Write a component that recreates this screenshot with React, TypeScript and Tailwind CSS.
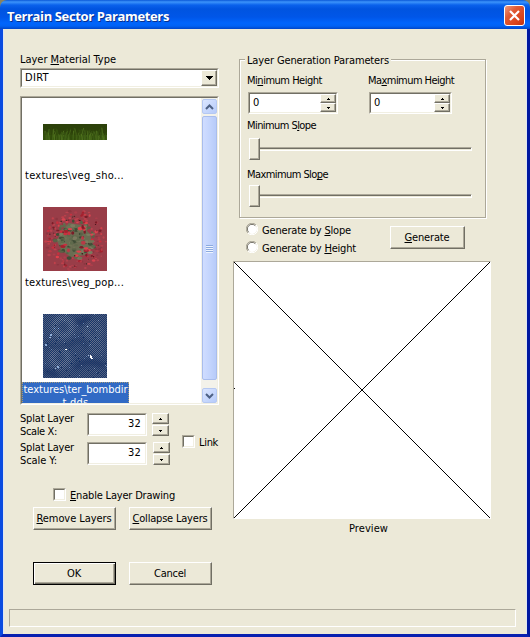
import { useLayoutEffect, useRef, useState, type ReactNode } from "react";

const SUNKEN =
  "border border-t-[#aca899] border-l-[#aca899] border-r-white border-b-white";
const SUNKEN_INNER =
  "border border-t-[#716f64] border-l-[#716f64] border-r-[#f1efe2] border-b-[#f1efe2]";
const RAISED =
  "bg-[#ece9d8] border border-t-white border-l-white border-r-[#716f64] border-b-[#716f64] shadow-[inset_-1px_-1px_0_#aca899]";

/* Text run fitted to a fixed width; "&" marks the mnemonic letter. */
function T({ text, w, className = "" }: { text: string; w: number; className?: string }) {
  const ref = useRef<HTMLSpanElement>(null);
  const [spacing, setSpacing] = useState(0);
  const at = text.indexOf("&");
  const plain = text.replace("&", "");
  useLayoutEffect(() => {
    if (ref.current) {
      setSpacing((w - ref.current.getBoundingClientRect().width) / plain.length);
    }
  }, [w, plain]);
  return (
    <span className={`block h-[13px] shrink-0 leading-[13px] whitespace-pre ${className}`}>
      <span ref={ref} style={{ letterSpacing: spacing }}>
        {at < 0 ? (
          plain
        ) : (
          <>
            {plain.slice(0, at)}
            <span className="underline decoration-1 underline-offset-1 [text-decoration-skip-ink:none]">
              {plain[at]}
            </span>
            {plain.slice(at + 1)}
          </>
        )}
      </span>
    </span>
  );
}

function Sunken({ children, className = "", inner = "" }: { children?: ReactNode; className?: string; inner?: string }) {
  return (
    <div className={`${SUNKEN} ${className}`}>
      <div className={`${SUNKEN_INNER} flex h-full w-full bg-white ${inner}`}>{children}</div>
    </div>
  );
}

function Button({ text, w, className = "w-[83px]", primary = false }: { text: string; w: number; className?: string; primary?: boolean }) {
  return (
    <button
      className={`flex h-[23px] items-start justify-center pr-px ${className} ${
        primary
          ? "border border-black bg-[#ece9d8] pt-[4px] shadow-[inset_1px_1px_0_#fff,inset_-1px_-1px_0_#716f64,inset_-2px_-2px_0_#aca899]"
          : `${RAISED} pt-[4px]`
      }`}
    >
      <T text={text} w={w} />
    </button>
  );
}

function SpinButton({ up, className }: { up?: boolean; className: string }) {
  return (
    <div className={`${RAISED} flex items-center justify-center ${className}`}>
      <svg width="3" height="2" shapeRendering="crispEdges">
        <path d={up ? "M1 0h1v1h1v1H0V1h1z" : "M0 0h3v1H2v1H1V1H0z"} fill="#000" />
      </svg>
    </div>
  );
}

function ScaleRow({ axis, shift }: { axis: string; shift?: boolean }) {
  return (
    <div className="flex h-[29px]">
      <div className="w-[67px]">
        <T text="Splat Layer" w={54} className="-mt-px" />
        <T text={`Scale ${axis}:`} w={37} />
      </div>
      <Sunken className="h-[23px] w-[60px]" inner="justify-end pt-[2px] pr-[4px]">
        <T text="32" w={13} />
      </Sunken>
      <div className={`flex flex-col gap-px ${shift ? "ml-[6px]" : "ml-[5px]"}`}>
        <SpinButton up className="h-[11px] w-[17px]" />
        <SpinButton className="h-[11px] w-[17px]" />
      </div>
    </div>
  );
}

function CheckBox() {
  return <Sunken className="h-[13px] w-[13px] shrink-0" />;
}

function Radio({ text, w }: { text: string; w: number }) {
  return (
    <div className="flex h-[18px]">
      <svg width="12" height="12" viewBox="0 0 12 12" className="mr-[4px]">
        <circle cx="6" cy="6" r="5" fill="#fff" />
        <path d="M1.9 10.1A5.6 5.6 0 0 1 10.1 1.9" fill="none" stroke="#aca899" />
        <path d="M2.7 9.3A4.6 4.6 0 0 1 9.3 2.7" fill="none" stroke="#716f64" />
        <path d="M10.1 1.9A5.6 5.6 0 0 1 1.9 10.1" fill="none" stroke="#fff" />
      </svg>
      <T text={text} w={w} className="mt-px" />
    </div>
  );
}

function HeightField({ label, w, className }: { label: string; w: number; className: string }) {
  return (
    <div>
      <T text={label} w={w} />
      <Sunken className={`mt-[5px] ml-px h-[22px] ${className}`} inner="pl-[3px]">
        <T text="0" w={6} className="mt-[2px] grow" />
        <div className="flex flex-col">
          <SpinButton up className="h-[9px] w-[16px]" />
          <SpinButton className="h-[9px] w-[16px]" />
        </div>
      </Sunken>
    </div>
  );
}

function Slider() {
  return (
    <div className="flex h-[22px] items-start pl-[2px]">
      <div className={`${RAISED} h-[22px] w-[11px]`} />
      <div className="mt-[9px] h-[4px] w-[212px] border-t border-r border-b border-t-[#aca899] border-r-white border-b-white">
        <div className="h-px bg-[#716f64]" />
      </div>
    </div>
  );
}

function randomizer(seed: number) {
  let s = seed;
  return () => {
    s = (s * 16807) % 2147483647;
    return s / 2147483647;
  };
}

function Grass() {
  const r = randomizer(71);
  const tints = ["#41611a", "#587c22", "#385610", "#4c6d1c", "#304a0c"];
  return (
    <svg width="64" height="16" className="block bg-[#2c410a]">
      <rect y="11" width="64" height="5" fill="#35500f" />
      {Array.from({ length: 100 }, (_, i) => {
        const x = (i * 64) / 100 + r() * 2;
        const h = 4 + r() * 9;
        const lean = (r() - 0.5) * 5;
        return (
          <path
            key={i}
            d={`M${x} 16Q${x} ${16 - h / 2} ${x + lean} ${16 - h}`}
            fill="none"
            stroke={tints[Math.floor(r() * 5)]}
            strokeWidth="0.7"
          />
        );
      })}
    </svg>
  );
}

function Poppies() {
  const r = randomizer(913);
  const leaves = ["#596246", "#6f7455", "#3f4d36", "#7b7a5f", "#5f6a4c"];
  const petals = ["#c92f3e", "#d84450", "#a5202e", "#e0404a", "#b83a46", "#7b1d28"];
  const blobs = (n: number, tints: string[], min: number, max: number, size: number, key: string) =>
    Array.from({ length: n }, (_, i) => {
      const a = r() * Math.PI * 2;
      const d = min + (max - min) * Math.sqrt(r());
      return (
        <ellipse
          key={key + i}
          cx={32 + Math.cos(a) * d}
          cy={33 + Math.sin(a) * d}
          rx={size * (0.5 + r() * 0.7)}
          ry={size * (0.4 + r() * 0.5)}
          fill={tints[i % tints.length]}
        />
      );
    });
  return (
    <svg width="64" height="64" className="block bg-[#993d48]">
      {blobs(120, ["#ad3e4b", "#b9434f", "#8d3540", "#c0404b"], 10, 31, 1.5, "o")}
      <path d="M18 24L26 16L38 18L47 27L50 38L42 48L28 50L18 43L14 34Z" fill="#6a6d52" />
      {blobs(90, leaves, 0, 20, 2.2, "l")}
      {blobs(60, petals, 15, 29, 1.6, "p")}
      {blobs(24, petals, 4, 16, 2.4, "c")}
      {blobs(26, ["#43151b", "#2d2a20"], 5, 27, 0.8, "d")}
    </svg>
  );
}

function BombDirt() {
  const r = randomizer(4242);
  return (
    <svg width="64" height="64" className="block bg-[#526080]">
      <defs>
        <pattern id="dither" width="2" height="2" patternUnits="userSpaceOnUse">
          <path d="M0 0h1v1H0zM1 1h1v1H1z" fill="#173568" shapeRendering="crispEdges" />
        </pattern>
        <filter id="soft">
          <feGaussianBlur stdDeviation="2.2" />
        </filter>
      </defs>
      <g filter="url(#soft)" fill="none">
        <circle cx="20" cy="13" r="9" stroke="#7b879d" strokeWidth="5" />
        <circle cx="50" cy="17" r="7" stroke="#707b93" strokeWidth="4" />
        <circle cx="54" cy="33" r="5" stroke="#69758e" strokeWidth="4" />
        <circle cx="17" cy="44" r="8" stroke="#78849d" strokeWidth="5" />
        <path d="M2 31Q15 38 28 30T44 34" stroke="#34466c" strokeWidth="4" />
        <path d="M32 54Q43 43 62 52M34 5Q37 14 46 2M1 57L15 61" stroke="#253963" strokeWidth="5" />
      </g>
      {Array.from({ length: 150 }, (_, i) => (
        <rect
          key={i}
          x={Math.floor(r() * 64)}
          y={Math.floor(r() * 64)}
          width="1"
          height="1"
          fill={["#8291ac", "#263c66", "#6f85a9", "#1d3462"][i % 4]}
        />
      ))}
      <rect width="64" height="64" fill="url(#dither)" />
      <path d="M7 20h2v2H7zM6 23h2v1H6zM2 30h2v2H2zM11 14h1v1h-1zM15 14h1v1h-1zM14 52h2v2h-2zM12 54h1v1h-1zM44 12h1v1h-1zM45 41h1v1h-1z" fill="#8dacd6" />
      <path d="M22 35h2v1h-2zM47 41h1v1h1v2h1v1h-2v-1h-1z" fill="#fff" />
    </svg>
  );
}

function ScrollButton({ up }: { up?: boolean }) {
  return (
    <div className="mx-auto flex h-[15px] w-[15px] shrink-0 items-center justify-center rounded-[2px] border border-[#b5c8f2] bg-gradient-to-br from-[#dbe6ff] to-[#b6cbfa]">
      <svg width="9" height="6" viewBox="0 0 9 6">
        <path d={up ? "M1 5L4.5 1.5L8 5" : "M1 1L4.5 4.5L8 1"} fill="none" stroke="#4d6185" strokeWidth="2" />
      </svg>
    </div>
  );
}

function TitleBar() {
  return (
    <div className="flex h-[29px] shrink-0 rounded-t-[7px] bg-[linear-gradient(#0a58d8_0px,#3c94fb_2px,#0a62ec_5px,#0054e0_9px,#0056e8_17px,#0065fc_23px,#0062f5_26px,#0046c8_29px)] pl-[7px]">
      <T
        text="Terrain Sector Parameters"
        w={162}
        className="mt-[10px] grow font-['Open_Sans',sans-serif] text-[13px] font-bold text-white [text-shadow:1px_1px_0_#0a318c]"
      />
      <div className="mt-[5px] mr-[5px] flex h-[21px] w-[21px] items-center justify-center rounded-[3px] border border-white bg-[linear-gradient(135deg,#ee9a7f_0%,#e05a35_35%,#d9431a_75%,#b83212_100%)]">
        <svg width="13" height="13" viewBox="0 0 13 13">
          <path d="M2 2L11 11M11 2L2 11" stroke="#fff" strokeWidth="2.2" />
        </svg>
      </div>
    </div>
  );
}

function TextureList() {
  return (
    <Sunken className="mt-[8px] h-[309px] w-[199px]" inner="overflow-hidden">
      <div className="h-[305px] w-[179px] shrink-0 overflow-hidden">
        <div className="mt-[26px] ml-[21px]"><Grass /></div>
        <T text={"textures\\veg_sho..."} w={99} className="mt-[29px] ml-[3px]" />
        <div className="mt-[25px] ml-[21px]"><Poppies /></div>
        <T text={"textures\\veg_pop..."} w={99} className="mt-[5px] ml-[3px]" />
        <div className="mt-[25px] ml-[21px]"><BombDirt /></div>
        <div className="mt-[4px] flex h-[30px] w-[107px] flex-col items-center border border-dotted border-[#a39a7c] bg-[#316ac5] text-white">
          <T text={"textures\\ter_bombdir"} w={104} />
          <T text="t.dds" w={26} />
        </div>
      </div>
      <div className="flex w-[16px] flex-col bg-[#f3f2ea] pt-px">
        <ScrollButton up />
        <div className="mx-auto mt-[2px] flex h-[264px] w-[15px] flex-col items-center justify-center gap-px rounded-[2px] border border-[#a9bdec] bg-[linear-gradient(90deg,#d0ddff,#c4d5fd_50%,#b7cbf9)]">
          <i className="h-px w-[7px] bg-[#8caadf] shadow-[0_1px_0_#eef4fe]" />
          <i className="h-px w-[7px] bg-[#8caadf] shadow-[0_1px_0_#eef4fe]" />
          <i className="h-px w-[7px] bg-[#8caadf] shadow-[0_1px_0_#eef4fe]" />
          <i className="h-px w-[7px] bg-[#8caadf] shadow-[0_1px_0_#eef4fe]" />
        </div>
        <div className="h-[8px] shrink-0" />
        <ScrollButton />
      </div>
    </Sunken>
  );
}

export default function App() {
  return (
    <div className="flex h-[637px] w-[530px] flex-col overflow-hidden bg-[#8a8360] font-['DejaVu_Sans_Condensed','DejaVu_Sans',sans-serif] text-[11px] text-black">
      <TitleBar />
      <div className="flex grow flex-col border-r-[3px] border-b-[3px] border-l-[3px] border-r-[#0018a0] border-b-[#0820b0] border-l-[#0a4be0] bg-[#ece9d8] pl-[6px] shadow-[inset_1px_0_0_#dfe6f2,inset_-1px_0_0_#dfe6f2]">
        <div className="flex h-[580px]">
          <div className="w-[213px] pt-[24px] pl-[11px]">
            <T text="Layer &Material Type" w={96} />
            <Sunken className="mt-[2px] h-[20px] w-[199px]" inner="pl-[3px]">
              <T text="DIRT" w={24} className="mt-px grow" />
              <div className={`${RAISED} flex h-[16px] w-[16px] items-center justify-center`}>
                <svg width="7" height="4" shapeRendering="crispEdges">
                  <path d="M0 0h7v1H6v1H5v1H4v1H3V3H2V2H1V1H0z" />
                </svg>
              </div>
            </Sunken>
            <TextureList />
            <div className="mt-[8px] flex">
              <div className="w-[162px]">
                <ScaleRow axis="X" />
                <ScaleRow axis="Y" shift />
              </div>
              <div className="flex pt-[22px]">
                <CheckBox />
                <T text="Link" w={19} className="mt-px ml-[4px]" />
              </div>
            </div>
            <div className="mt-[17px] ml-[33px] flex">
              <CheckBox />
              <T text="&Enable Layer Drawing" w={105} className="mt-px ml-[4px]" />
            </div>
            <div className="mt-[5px] ml-[13px] grid w-[179px] grid-cols-2 gap-x-[13px] gap-y-[32px]">
              <Button text="&Remove Layers" w={75} />
              <Button text="&Collapse Layers" w={75} />
              <Button text="OK" w={14} primary />
              <Button text="Cancel" w={32} />
            </div>
          </div>

          <div className="pt-[30px] pl-[11px]">
            <fieldset className="ml-[6px] flex h-[159px] w-[247px] flex-col border border-[#aca899] pl-[7px] shadow-[inset_1px_1px_0_#fff,1px_1px_0_#fff]">
              <div className="-mt-[6px] -ml-[2px] w-[146px] bg-[#ece9d8] pl-[2px]">
                <T text="Layer Generation Parameters" w={142} />
              </div>
              <div className="mt-[7px] flex">
                <div className="w-[121px]">
                  <HeightField label="Mi&nimum Height" w={75} className="w-[90px]" />
                </div>
                <HeightField label="Ma&xmimum Height" w={86} className="w-[83px]" />
              </div>
              <T text="Minimum S&lope" w={69} className="mt-[5px] mb-[6px]" />
              <Slider />
              <T text="Maxmimum Slo&pe" w={81} className="mt-[8px] mb-[4px]" />
              <Slider />
            </fieldset>
            <div className="mt-[5px] flex pl-[13px]">
              <div className="w-[144px]">
                <Radio text="Generate by &Slope" w={89} />
                <Radio text="Generate by &Height" w={94} />
              </div>
              <div className="pt-[3px]">
                <Button text="&Generate" w={45} className="w-[75px]" />
              </div>
            </div>
            <div className="mt-[2px] h-[258px] w-[258px] border border-t-[#aca899] border-r-white border-b-white border-l-[#aca899] bg-white">
              <svg width="256" height="256" shapeRendering="crispEdges" className="block">
                <path d="M0 0L256 256M256 0L0 256" stroke="#000" strokeWidth="1" />
                <rect x="0" y="126" width="1" height="1" />
              </svg>
            </div>
            <T text="Preview" w={39} className="mt-[3px] ml-[116px]" />
          </div>
        </div>
        <div className="h-[18px] w-[507px] border border-t-[#aca899] border-r-white border-b-white border-l-[#aca899]" />
      </div>
    </div>
  );
}
